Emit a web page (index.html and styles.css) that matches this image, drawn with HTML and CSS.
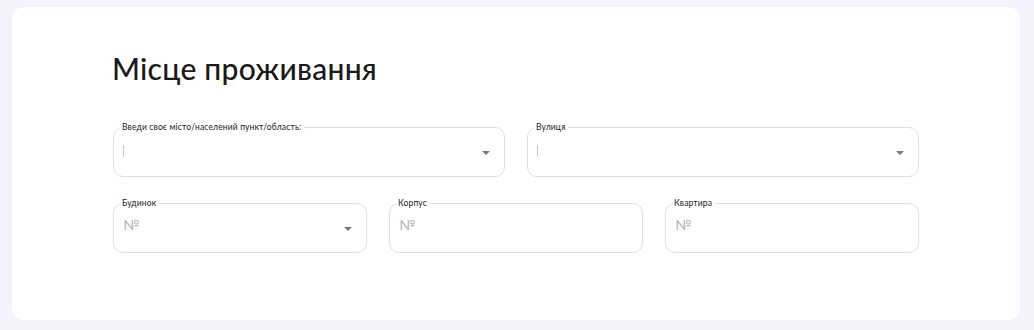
FILE: index.html
```html
<!DOCTYPE html>
<html lang="uk">
<head>
<meta charset="utf-8">
<link rel="stylesheet" href="styles.css">
</head>
<body>
<section class="card">
  <h1 class="title">Місце проживання</h1>
  <div class="row row-2">
    <fieldset class="field">
      <legend>Введи своє місто/населений пункт/область:</legend>
      <div class="control"><span class="caret"></span><span class="arrow"></span></div>
    </fieldset>
    <fieldset class="field">
      <legend>Вулиця</legend>
      <div class="control"><span class="caret"></span><span class="arrow"></span></div>
    </fieldset>
  </div>
  <div class="row row-3">
    <fieldset class="field">
      <legend>Будинок</legend>
      <div class="control"><span class="ph">№</span><span class="arrow"></span></div>
    </fieldset>
    <fieldset class="field">
      <legend>Корпус</legend>
      <div class="control"><span class="ph">№</span></div>
    </fieldset>
    <fieldset class="field">
      <legend>Квартира</legend>
      <div class="control"><span class="ph">№</span></div>
    </fieldset>
  </div>
</section>
</body>
</html>
```
FILE: styles.css
```css
* { box-sizing: border-box; }
html, body { margin: 0; padding: 0; }
body {
  background: #f3f3fd;
  font-family: "Lato", "Noto Sans", sans-serif;
  color: #1d1d1f;
  padding: 7px 14px 10px 12px;
}
.card {
  background: #ffffff;
  border-radius: 12px;
  height: 313px;
  padding: 43px 101px 0 100px;
}
.title {
  margin: 0 0 36px 0;
  font-size: 30px;
  line-height: 36px;
  font-weight: 500;
  letter-spacing: 0.25px;
  color: #1a1a1a;
}
.row {
  display: grid;
  gap: 22px;
  margin-left: 1px;
  margin-bottom: 21px;
}
.row-2 { grid-template-columns: 1fr 1fr; }
.row-3 { grid-template-columns: 1fr 1fr 1fr; }
.field {
  margin: 0;
  min-width: 0;
  border: 1px solid #dedede;
  border-radius: 10px;
  padding: 0 9px 5px 9px;
}
.field legend {
  font-size: 8.5px;
  line-height: 10px;
  letter-spacing: 0.15px;
  padding: 0 3px 0 1px;
  margin-left: -2px;
  color: #1a1a1a;
}
.control {
  height: 39px;
  display: flex;
  align-items: center;
  justify-content: space-between;
}
.caret {
  display: block;
  width: 1px;
  height: 12px;
  background: #c8c8c8;
  margin-top: -2px;
}
.ph {
  font-size: 14px;
  color: #b4b4b4;
  margin-top: -6px;
}
.arrow {
  width: 0;
  height: 0;
  border-left: 4px solid transparent;
  border-right: 4px solid transparent;
  border-top: 4px solid #7a7a7a;
  margin-right: 5px;
  margin-top: 2px;
}
```
